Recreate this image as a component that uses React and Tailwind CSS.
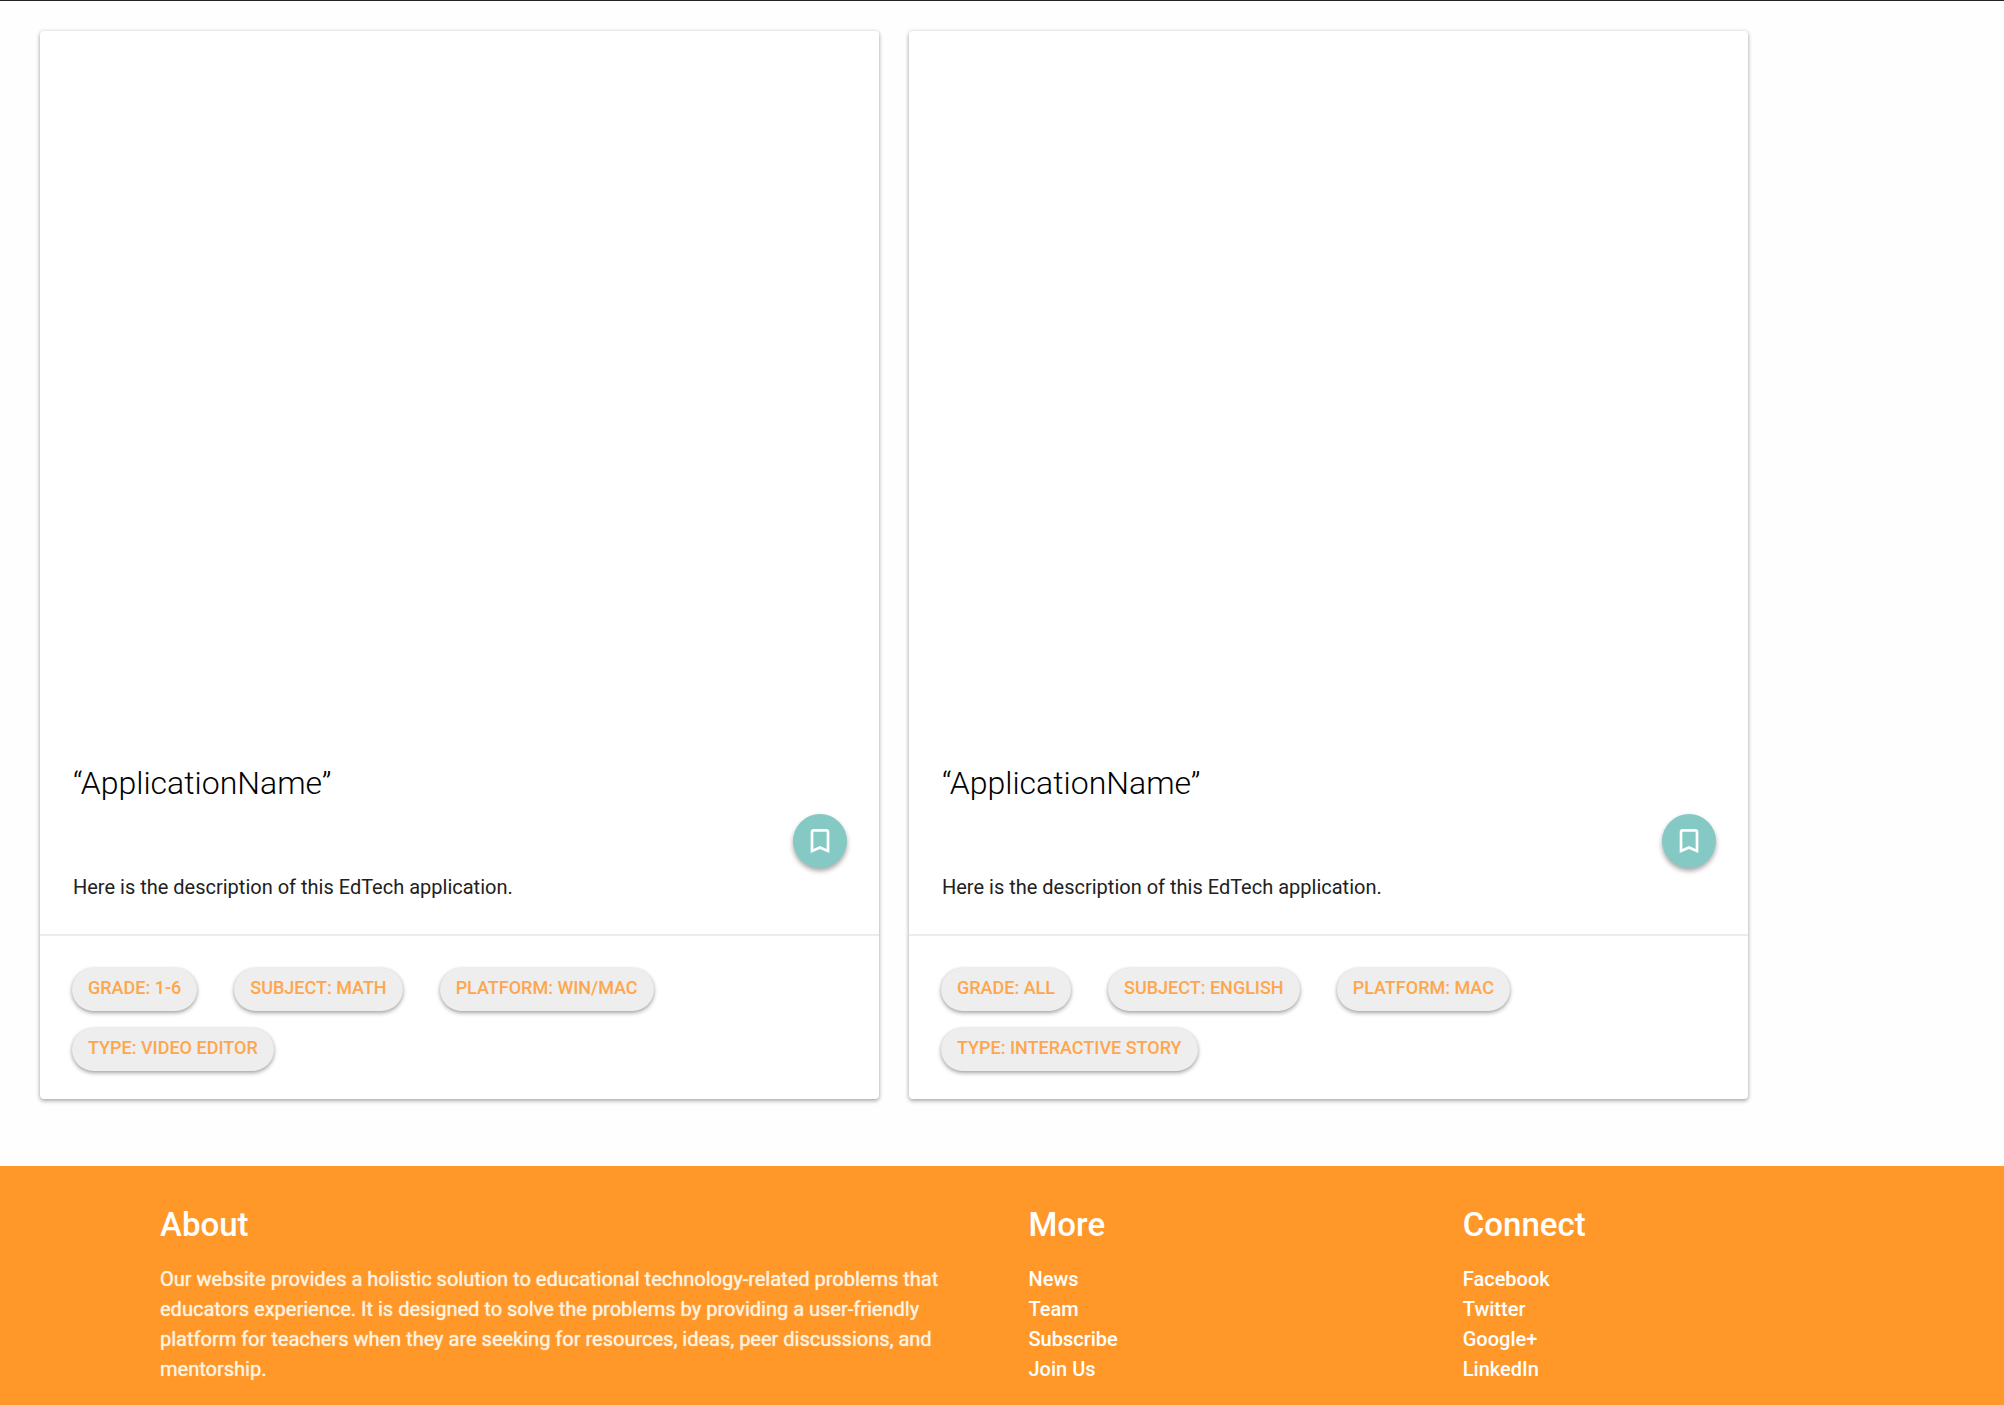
const cards = [
  {
    id: 'math',
    tags: ['Grade: 1-6', 'Subject: Math', 'Platform: Win/Mac', 'Type: Video Editor'],
  },
  {
    id: 'english',
    tags: ['Grade: All', 'Subject: English', 'Platform: Mac', 'Type: Interactive Story'],
  },
];

const linkGroups = [
  { title: 'More', links: ['News', 'Team', 'Subscribe', 'Join Us'] },
  { title: 'Connect', links: ['Facebook', 'Twitter', 'Google+', 'LinkedIn'] },
];

function BookmarkIcon() {
  return (
    <svg viewBox="0 0 24 24" className="size-8" fill="currentColor" aria-hidden="true">
      <path d="M17 3H7c-1.100 0-1.990.9-1.990 2L5 21l7-3 7 3V5c0-1.100-.9-2-2-2zm0 15l-5-2.180L7 18V5h10v13z" />
    </svg>
  );
}

function AppCard({ tags }) {
  return (
    <article className="flex flex-col rounded-sm bg-white shadow-[0_2px_4px_rgba(0,0,0,0.3),0_0_4px_rgba(0,0,0,0.12)]">
      <div className="h-[728px]" />
      <div className="pr-8 pb-8 pl-[33px]">
        <h2 className="text-[32px] leading-[48px] font-light text-black">“ApplicationName”</h2>
        <div className="mt-[7px] flex justify-end">
          <button
            type="button"
            aria-label="Bookmark"
            className="flex size-[54px] items-center justify-center rounded-full bg-[#84c9c3] text-white shadow-[0_3px_5px_rgba(0,0,0,0.35)]"
          >
            <BookmarkIcon />
          </button>
        </div>
        <p className="mt-1 text-[20px] leading-[30px] text-[#212121]">
          Here is the description of this EdTech application.
        </p>
      </div>
      <div className="flex flex-wrap gap-x-[37px] gap-y-[17px] border-t-2 border-[#ececec] px-8 pt-8 pb-7">
        {tags.map((tag) => (
          <button
            key={tag}
            type="button"
            className="rounded-full bg-[#eeeeee] px-4 pt-1 pb-2 text-[18px] leading-[31px] font-medium text-[#ffa64d] uppercase shadow-[0_2px_4px_rgba(0,0,0,0.35),0_0_3px_rgba(0,0,0,0.08)]"
          >
            {tag}
          </button>
        ))}
      </div>
    </article>
  );
}

export default function App() {
  return (
    <div className="flex min-h-screen flex-col border-t border-[#222222] bg-[#fefefe] font-[Roboto,sans-serif]">
      <main className="grid grid-cols-2 gap-[30px] pt-[30px] pr-64 pb-[67px] pl-10">
        {cards.map((card) => (
          <AppCard key={card.id} tags={card.tags} />
        ))}
      </main>
      <footer className="grid grow grid-cols-[2fr_1fr_1fr] bg-[#ff9829] pt-9 pr-[122px] pb-4 pl-[145px] text-white">
        <section className="px-[15px]">
          <h3 className="text-[33px] leading-[46px] font-medium">About</h3>
          <p className="mt-4 text-[20px] leading-[30px] text-[#fff3e0] [text-shadow:0_0_1px_#fff3e0]">
            Our website provides a holistic solution to educational technology-related problems that
            educators experience. It is designed to solve the problems by providing a user-friendly
            platform for teachers when they are seeking for resources, ideas, peer discussions, and
            mentorship.
          </p>
        </section>
        {linkGroups.map((group) => (
          <nav key={group.title} aria-label={group.title} className="px-[15px]">
            <h3 className="text-[33px] leading-[46px] font-medium">{group.title}</h3>
            <ul className="mt-4 text-[20px] leading-[30px] font-medium">
              {group.links.map((link) => (
                <li key={link}>
                  <a href="#">{link}</a>
                </li>
              ))}
            </ul>
          </nav>
        ))}
      </footer>
    </div>
  );
}
